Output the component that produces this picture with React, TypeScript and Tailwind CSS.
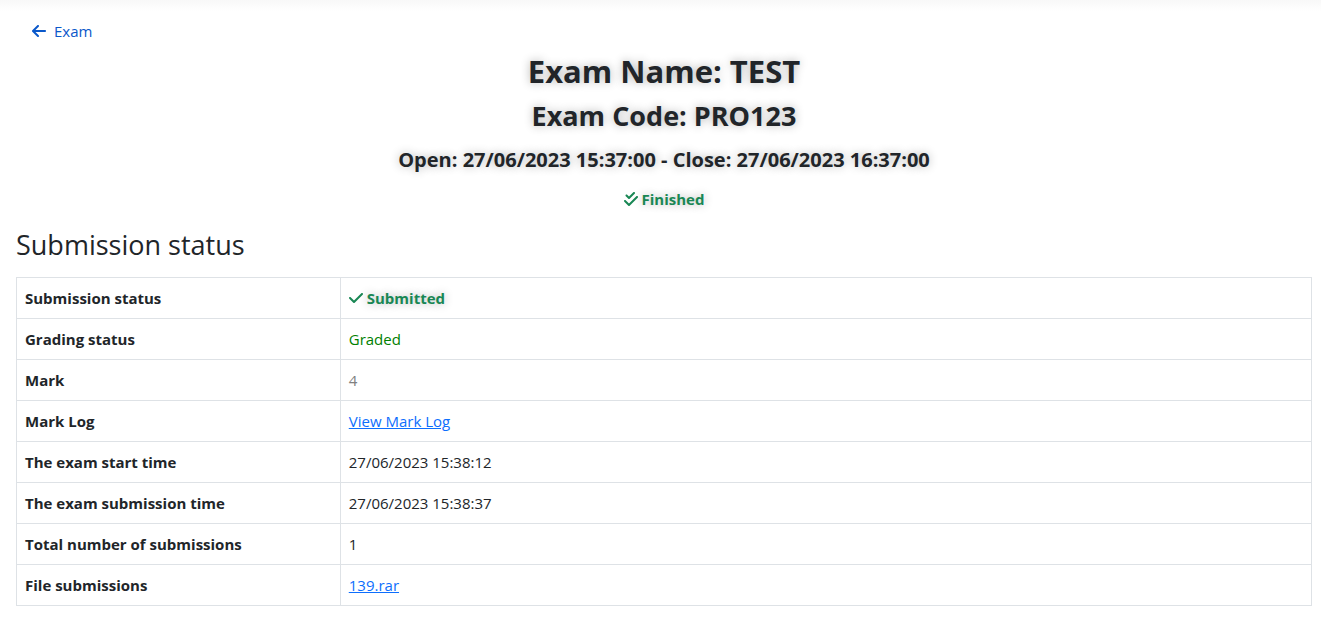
import type { ReactNode } from "react";
import { FaArrowLeft, FaCheck, FaCheckDouble } from "react-icons/fa6";

const shadow = "[text-shadow:0_0_10px_rgba(0,0,0,0.3)]";
const link = "text-[#0d6efd] underline";

const rows: { label: string; value: ReactNode }[] = [
  {
    label: "Submission status",
    value: (
      <span className={`flex items-center gap-1 font-bold text-[#198754] ${shadow}`}>
        <FaCheck className="h-4 w-[14px]" />
        Submitted
      </span>
    ),
  },
  { label: "Grading status", value: <span className="text-[#008000]">Graded</span> },
  { label: "Mark", value: <span className="text-[#808080]">4</span> },
  { label: "Mark Log", value: <a href="#mark-log" className={link}>View Mark Log</a> },
  { label: "The exam start time", value: "27/06/2023 15:38:12" },
  { label: "The exam submission time", value: "27/06/2023 15:38:37" },
  { label: "Total number of submissions", value: "1" },
  { label: "File submissions", value: <a href="#file" className={link}>139.rar</a> },
];

export default function App() {
  return (
    <div className="min-h-screen bg-white font-['Open_Sans','Noto_Sans',sans-serif] text-[15px] leading-6 text-[#212529]">
      <div className="h-[11px] bg-linear-to-b from-[#f8f8f8] to-white" />
      <main className="pr-[9px] pl-4">
        <nav className="flex px-4 pt-2">
          <a href="#exam" className="flex items-center gap-2 text-[#0a58ca]">
            <FaArrowLeft className="h-4 w-[14px]" />
            Exam
          </a>
        </nav>
        <header className={`mt-2 flex flex-col items-center text-center ${shadow}`}>
          <h1 className="text-[31px] leading-10 font-bold">Exam Name: TEST</h1>
          <h2 className="mt-[9px] text-[27px] leading-8 font-bold">Exam Code: PRO123</h2>
          <h3 className="mt-4 text-[20px] leading-6 font-bold">
            Open: 27/06/2023 15:37:00 - Close: 27/06/2023 16:37:00
          </h3>
          <p className="mt-[15px] flex items-center gap-1 font-bold text-[#198754]">
            <FaCheckDouble className="h-4 w-[14px]" />
            Finished
          </p>
        </header>
        <section className="mt-4">
          <h2 className="text-[27px] leading-9 font-medium">Submission status</h2>
          <table className="mt-[14px] mb-4 w-full border-collapse">
            <tbody>
              {rows.map((row) => (
                <tr key={row.label}>
                  <th scope="row" className="w-1/4 border border-[#dee2e6] p-2 text-left font-bold">
                    {row.label}
                  </th>
                  <td className="border border-[#dee2e6] p-2">{row.value}</td>
                </tr>
              ))}
            </tbody>
          </table>
        </section>
      </main>
    </div>
  );
}
